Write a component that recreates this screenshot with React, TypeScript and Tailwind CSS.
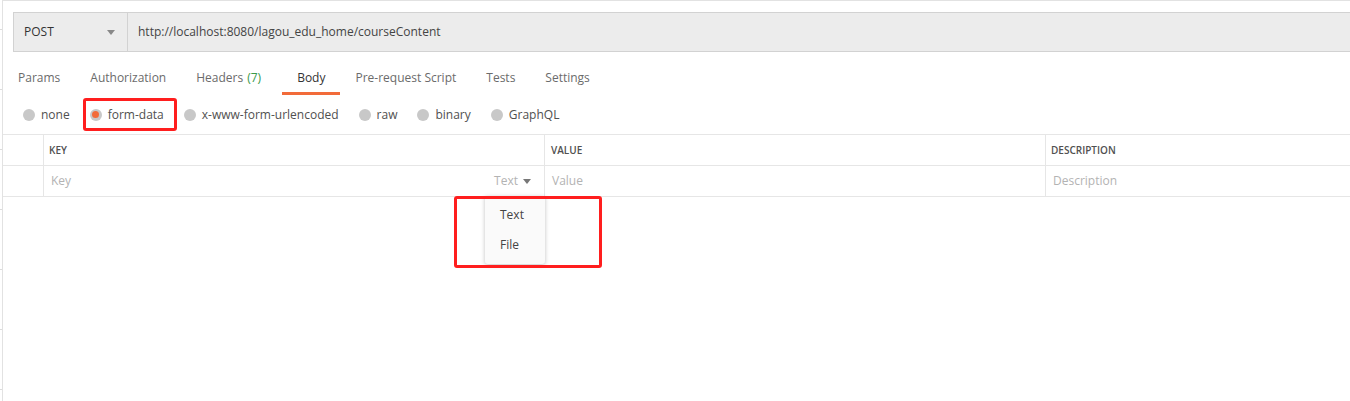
import React from "react";

const font = { fontFamily: '"Open Sans", "Liberation Sans", sans-serif' };

function Radio({ label, checked }: { label: string; checked?: boolean }) {
  return (
    <div className="flex items-center">
      <span className="relative flex h-[12px] w-[12px] items-center justify-center rounded-full bg-[#c8c8c8]">
        {checked && <span className="h-[7px] w-[7px] rounded-full bg-[#f26b3a]" />}
      </span>
      <span className="ml-[6px] text-[12px] leading-[16px] text-[#505050]">{label}</span>
    </div>
  );
}

export default function App() {
  const tabs = [
    { label: "Params" },
    { label: "Authorization" },
    { label: "Headers", count: "(7)" },
    { label: "Body", active: true },
    { label: "Pre-request Script" },
    { label: "Tests" },
    { label: "Settings" },
  ];
  const ticks = [29, 89, 149, 209, 269, 329, 389];
  return (
    <div className="relative flex h-[401px] w-[1350px] overflow-hidden bg-white" style={font}>
      {/* left gutter with ticks */}
      <div className="relative w-[2px] shrink-0">
        {ticks.map((t) => (
          <div key={t} className="absolute left-0 h-px w-[2px] bg-[#dcdcdc]" style={{ top: t }} />
        ))}
      </div>
      <div className="flex min-w-0 flex-1 flex-col border-l border-t border-[#e2e2e2]">
        {/* URL bar */}
        <div className="ml-[10px] mt-[11px] flex h-[40px] border-y border-l border-[#d2d2d2] bg-[#ececec]">
          <div className="flex w-[114px] shrink-0 items-center justify-between border-r border-[#d2d2d2] pl-[10px] pr-[12px]">
            <span className="text-[12px] leading-[16px] text-[#333]">POST</span>
            <span className="h-0 w-0 border-x-[4px] border-t-[5px] border-x-transparent border-t-[#888]" />
          </div>
          <div className="flex items-center pl-[10px] text-[12px] leading-[16px] text-[#444]">
            http://localhost:8080/lagou_edu_home/courseContent
          </div>
        </div>

        {/* Tabs */}
        <div className="mt-[10px] flex">
          {tabs.map((t) => (
            <div
              key={t.label}
              className={
                "pl-[15px] pb-[6px] pt-[8px] text-[12px] leading-[16px] border-b-[3px] " +
                (t.count ? "pr-[21px] " : "pr-[15px] ") +
                (t.active ? "border-[#f26b3a] text-[#333]" : "border-transparent text-[#6b6b6b]")
              }
            >
              {t.label}
              {t.count && <span className="ml-[4px] text-[#3a9a4a]">{t.count}</span>}
            </div>
          ))}
        </div>

        {/* Radio row */}
        <div className="flex h-[39px] items-center gap-[20px] pl-[20px]">
          <Radio label="none" />
          <Radio label="form-data" checked />
          <Radio label="x-www-form-urlencoded" />
          <Radio label="raw" />
          <Radio label="binary" />
          <Radio label="GraphQL" />
        </div>

        {/* Table */}
        <div className="grid grid-cols-[40px_501px_501px_1fr] border-t border-[#e6e6e6]">
          <div className="h-[31px] border-b border-[#e6e6e6]" />
          <div className="flex h-[31px] items-center border-b border-l border-[#e6e6e6] pl-[5px] text-[10px] font-semibold text-[#505050]">
            KEY
          </div>
          <div className="flex h-[31px] items-center border-b border-l border-[#e6e6e6] pl-[6px] text-[10px] font-semibold text-[#505050]">
            VALUE
          </div>
          <div className="flex h-[31px] items-center border-b border-l border-[#e6e6e6] pl-[5px] text-[10px] font-semibold text-[#505050]">
            DESCRIPTION
          </div>

          <div className="h-[31px] border-b border-[#e6e6e6]" />
          <div className="relative flex h-[31px] items-center justify-between border-b border-l border-[#e6e6e6] pl-[7px] pr-[13px] text-[12px]">
            <span className="text-[#b3b3b3]">Key</span>
            <span className="flex items-center text-[#b3b3b3]">
              Text
              <span className="ml-[5px] h-0 w-0 border-x-[4px] border-t-[5px] border-x-transparent border-t-[#777]" />
            </span>
            {/* dropdown menu */}
            <div className="absolute left-[441px] top-[30px] z-10 w-[60px] rounded-b-[3px] bg-[#fafafa] py-[4px] shadow-[0_1px_4px_rgba(0,0,0,0.25)]">
              <div className="flex h-[30px] items-center pl-[15px] text-[12px] text-[#444]">Text</div>
              <div className="flex h-[30px] items-center pl-[15px] text-[12px] text-[#444]">File</div>
            </div>
          </div>
          <div className="flex h-[31px] items-center border-b border-l border-[#e6e6e6] pl-[7px] text-[12px] text-[#b3b3b3]">
            Value
          </div>
          <div className="flex h-[31px] items-center border-b border-l border-[#e6e6e6] pl-[7px] text-[12px] text-[#b3b3b3]">
            Description
          </div>
        </div>
      </div>

      {/* red annotation boxes */}
      <div className="pointer-events-none absolute left-[83px] top-[98px] z-20 h-[33px] w-[94px] rounded-[3px] border-[3px] border-[#ff1e1e]" />
      <div className="pointer-events-none absolute left-[454px] top-[196px] z-20 h-[72px] w-[148px] rounded-[3px] border-[3px] border-[#ff1e1e]" />
    </div>
  );
}
